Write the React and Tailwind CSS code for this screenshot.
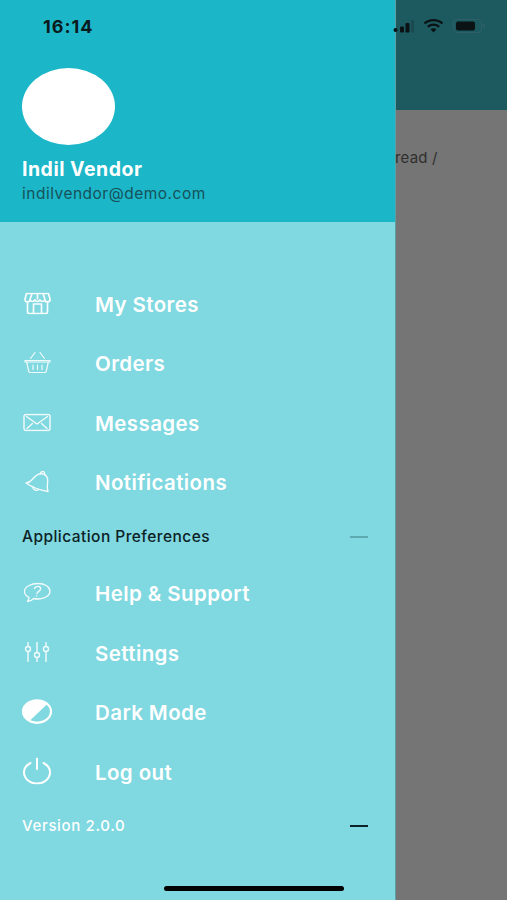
const font = { fontFamily: '"Inter", "Liberation Sans", sans-serif' };

const Store = () => (
  <svg width="27" height="22" viewBox="0 0 27 22" fill="none" stroke="white" strokeWidth="1.700" strokeLinejoin="round" opacity="0.95">
    <path d="M2.500 1h22L26 6.500a2.500 2.500 0 0 1-5 .8 2.700 2.700 0 0 1-5 0 2.700 2.700 0 0 1-5 0 2.700 2.700 0 0 1-5 0 2.500 2.500 0 0 1-5-.8z" />
    <path d="M8 1 6 7M13.500 1v6M19 1l2 6M3.500 10v9.500A1.500 1.500 0 0 0 5 21h17a1.500 1.500 0 0 0 1.500-1.500V10" />
    <path d="M9.500 21v-9.500h8V21" />
  </svg>
);
const Basket = () => (
  <svg width="27" height="22" viewBox="0 0 27 22" fill="none" stroke="white" strokeWidth="1.200" strokeLinecap="round" strokeLinejoin="round" opacity="0.9">
    <path d="M1 9h25v1.500H1zM2.800 11l2 9a1.500 1.500 0 0 0 1.500 1h14.400a1.500 1.500 0 0 0 1.500-1l2-9" />
    <path d="M6.500 7 11 1M20.500 7 16 1M9 13.500v4.500M13.500 13.500v4.500M18 13.500v4.500" />
  </svg>
);
const Mail = () => (
  <svg width="28" height="18" viewBox="0 0 28 18" fill="none" stroke="white" strokeWidth="1.400" strokeLinecap="round" strokeLinejoin="round" opacity="0.9">
    <rect x="1" y="1" width="26" height="16" rx="2" />
    <path d="M3.500 3 14 10.500 24.500 3M4 15l5.500-5M24 15l-5.500-5" />
  </svg>
);
const Bell = () => (
  <svg width="25" height="23" viewBox="0 0 25 23" fill="none" stroke="white" strokeWidth="1.400" strokeLinecap="round" strokeLinejoin="round" opacity="0.9">
    <path d="M1 12.500c3-.3 4.800-1.800 6.500-3.800C10 5.500 13 3 17 3.300c3.600.3 6 3.300 5.700 7-.2 3.500-1.200 6.500.3 10.700C16.500 20 8 17.500 1 12.500z" />
    <path d="M15.500 3.300c0-1.500 1.500-2.800 3-2.100 1.300.6 1.400 2 .8 3.200M8 16.500c-.3 2.800 3.500 4.500 5.800 2.500" />
  </svg>
);
const Help = () => (
  <svg width="28" height="20" viewBox="0 0 28 20" fill="none" stroke="white" strokeWidth="1.300" strokeLinecap="round" strokeLinejoin="round" opacity="0.9">
    <path d="M15 1c6.800 0 12 3.300 12 7.700s-5.200 7.800-12 7.800c-1.500 0-2.900-.2-4.200-.5C9 17.800 7 18.800 4.500 19c1-1.200 1.500-2.500 1.500-4.200C3 13.400 1.500 11.200 1.500 8.700 1.500 4.300 8 1 15 1z" />
    <path d="M11.500 6.200c.4-1.500 1.600-2.300 3.200-2.300 1.800 0 3 1 3 2.400 0 2.300-3.500 2.300-3.800 5M13.600 13.300v.2" />
  </svg>
);
const Sliders = () => (
  <svg width="26" height="21" viewBox="0 0 26 21" fill="none" stroke="white" strokeWidth="1.400" strokeLinecap="round" opacity="0.9">
    <path d="M4 1v4M4 10v10M13 1v10M13 16v4M22 1v4M22 10v10" />
    <circle cx="4" cy="7.500" r="2.500" />
    <circle cx="13" cy="13.500" r="2.500" />
    <circle cx="22" cy="7.500" r="2.500" />
  </svg>
);
const Half = () => (
  <svg width="32" height="26" viewBox="0 0 32 26">
    <ellipse cx="16" cy="13" rx="15" ry="12" fill="#80D8E0" stroke="white" strokeWidth="2.400" />
    <path d="M27 4.500C22 1 14 0 8 3 2 6-.5 13 2 18c1 2 3 3.500 6 5L27 5z" fill="white" />
  </svg>
);
const Power = () => (
  <svg width="30" height="27" viewBox="0 0 30 27" fill="none" stroke="white" strokeWidth="2" strokeLinecap="round">
    <path d="M15 1v10.500M8.500 5.500C4.500 7.500 2 10.500 2 14.700 2 21 7.800 26 15 26s13-5 13-11.300c0-4.200-2.500-7.200-6.500-9.200" />
  </svg>
);

function Row({ icon, label }) {
  return (
    <div className="flex items-center h-[59.6px]">
      <div className="w-[30px] mr-[43px] flex items-center justify-center -translate-y-[1.500px]">{icon}</div>
      <span className="text-[20.500px] leading-none font-semibold text-white tracking-[0.4px]">{label}</span>
    </div>
  );
}

export default function App() {
  return (
    <div style={font} className="relative flex w-[507px] h-[900px] overflow-hidden bg-[#757575]">
      <div className="w-[395px] h-full flex flex-col bg-[#80D8E0] shrink-0">
        <div className="h-[222px] bg-[#1BB6C8] flex flex-col pl-[22px] pt-[68px]">
          <div className="w-[93px] h-[77px] rounded-[50%] bg-white" />
          <div className="mt-[12px] text-[19.500px] leading-[24px] font-bold text-white tracking-[0.5px]">Indil Vendor</div>
          <div className="mt-[3px] text-[15.500px] leading-[20px] text-[#17515a] tracking-[0.5px]">indilvendor@demo.com</div>
        </div>
        <div className="flex-1 px-[22px] pt-[53px] flex flex-col">
          <Row icon={<Store />} label="My Stores" />
          <Row icon={<Basket />} label="Orders" />
          <Row icon={<Mail />} label="Messages" />
          <Row icon={<Bell />} label="Notifications" />
          <div className="flex items-center justify-between h-[47px] mb-[4px] pr-[5px]">
            <span className="text-[15.500px] font-medium text-[#0c2226] tracking-[0.45px]">Application Preferences</span>
            <span className="w-[18px] h-[2px] bg-[#5fa9b0]" />
          </div>
          <Row icon={<Help />} label="Help & Support" />
          <Row icon={<Sliders />} label="Settings" />
          <Row icon={<Half />} label="Dark Mode" />
          <Row icon={<Power />} label="Log out" />
          <div className="flex items-center justify-between h-[47px] pr-[5px]">
            <span className="text-[15px] font-medium text-white tracking-[0.65px]">Version 2.0.0</span>
            <span className="w-[18px] h-[2px] bg-[#0c2226]" />
          </div>
        </div>
      </div>
      <div className="flex-1 flex flex-col border-l border-[#5f9ea3]">
        <div className="h-[110px] bg-[#1D5A60]" />
        <div className="flex-1 bg-[#757575] pt-[38px]">
          <span className="block text-[15px] leading-[20px] text-[#2f2f2f] -ml-[1px] tracking-[0.2px]">read /</span>
        </div>
      </div>

      <div className="absolute top-[16px] left-[43px] text-[18px] leading-[22px] font-bold text-[#0b1a1d] tracking-[1px]">16:14</div>
      <div className="absolute top-[18px] left-[393px] flex items-center gap-[9px]">
        <svg width="21" height="16" viewBox="0 0 21 16">
          <circle cx="2.500" cy="12" r="2" fill="#0a1214" />
          <rect x="7" y="8.500" width="4" height="6" rx="1" fill="#0a1214" />
          <rect x="12.500" y="5" width="4" height="9.500" rx="1" fill="#0a1214" />
          <rect x="18" y="2" width="3" height="12.500" rx="1" fill="#1a4a4f" />
        </svg>
        <svg width="21" height="16" viewBox="0 0 21 16" fill="none" stroke="#0a1214" strokeWidth="2.200">
          <path d="M1.500 5.500c5-4.500 13-4.500 18 0M4.800 8.800c3.300-2.800 8.100-2.800 11.400 0" />
          <path d="M10.500 14.500 7.500 11.300c1.800-1.300 4.200-1.300 6 0z" fill="#0a1214" stroke="none" />
        </svg>
        <svg width="33" height="16" viewBox="0 0 33 16" fill="none">
          <rect x="0.500" y="1.500" width="28" height="13" rx="3.500" stroke="#2f6066" />
          <rect x="3" y="3.500" width="19" height="9" rx="2" fill="#0a1214" />
          <rect x="30" y="6" width="1.500" height="4" rx="0.700" fill="#2f6066" />
        </svg>
      </div>
      <div className="absolute left-[164px] top-[886px] w-[180px] h-[5px] rounded-full bg-black" />
    </div>
  );
}
